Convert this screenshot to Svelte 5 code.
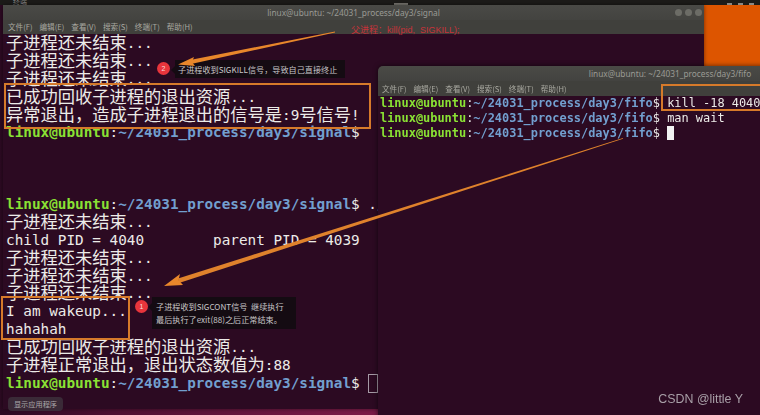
<script>
	const menu = ["文件(F)", "编辑(E)", "查看(V)", "搜索(S)", "终端(T)", "帮助(H)"];
	const signalPath = "~/24031_process/day3/signal";
	const fifoPath = "~/24031_process/day3/fifo";

	const signalLines = [
		{ text: "子进程还未结束..." },
		{ text: "子进程还未结束..." },
		{ text: "子进程还未结束..." },
		{ text: "已成功回收子进程的退出资源..." },
		{ text: "异常退出，造成子进程退出的信号是:9号信号!" },
		{ path: signalPath },
		{ text: "" },
		{ text: "" },
		{ text: "" },
		{ path: signalPath, cmd: " ./a.out" },
		{ text: "子进程还未结束..." },
		{ text: "child PID = 4040        parent PID = 4039" },
		{ text: "子进程还未结束..." },
		{ text: "子进程还未结束..." },
		{ text: "子进程还未结束..." },
		{ text: "I am wakeup..." },
		{ text: "hahahah" },
		{ text: "已成功回收子进程的退出资源..." },
		{ text: "子进程正常退出，退出状态数值为:88" },
		{ path: signalPath, cmd: " ", cursor: "hollow" },
	];

	const fifoLines = [
		{ path: fifoPath, cmd: " kill -18 4040" },
		{ path: fifoPath, cmd: " man wait" },
		{ path: fifoPath, cmd: " ", cursor: "solid" },
	];

	// terminal cells: wide chars take two columns, so they get their own font size
	function runs(text) {
		return text.split(/([^\x00-\x7f]+)/).filter(Boolean).map((t) => ({
			t,
			wide: t.charCodeAt(0) > 127,
		}));
	}
</script>

{#snippet lines(list)}
	{#each list as line}
		<div class="line">
			{#if line.path}
				<b class="user">linux@ubuntu</b>:<b class="path">{line.path}</b>${line.cmd ?? ""}{#if line.cursor}<i class={line.cursor}></i>{/if}
			{:else}
				{#each runs(line.text) as run}<span class:wide={run.wide}>{run.t}</span>{/each}
			{/if}
		</div>
	{/each}
{/snippet}

{#snippet menubar()}
	<div class="menu">
		{#each menu as item}
			<span>{item}</span>
		{/each}
	</div>
{/snippet}

<div class="desktop">
	<div class="soft">
		<div class="panel">
			<span>终端</span>
			<i class="clock"></i>
			<i class="tray"></i>
			<i class="tray"></i>
			<i class="tray"></i>
		</div>

		<section class="window back">
			<header class="title">
				<span>linux@ubuntu: {signalPath}</span>
				<div class="controls"><i></i><i></i><i></i></div>
			</header>
			{@render menubar()}
			<div class="term">{@render lines(signalLines)}</div>
		</section>

		<section class="window front">
			<header class="title">
				<span>linux@ubuntu: {fifoPath}</span>
			</header>
			{@render menubar()}
			<div class="term">{@render lines(fifoLines)}</div>
		</section>

		<button class="apps">显示应用程序</button>

		<div class="box box-exit"></div>
		<div class="box box-kill"></div>
		<div class="box box-wake"></div>

		<div class="parent-note">父进程：kill(pid,&nbsp; SIGKILL);</div>

		<div class="badge badge-two">2</div>
		<div class="tip tip-two">子进程收到SIGKILL信号，导致自己直接终止</div>

		<div class="badge badge-one">1</div>
		<div class="tip tip-one">
			子进程收到SIGCONT信号&nbsp; 继续执行<br />最后执行了exit(88)之后正常结束。
		</div>

		<svg class="arrows" viewBox="0 0 760 415" aria-hidden="true">
			<polygon points="335,31.5 190,60 191,64 335,32.5" fill="#e8872b" />
			<polygon points="178,64.5 194,57 192,62 195,66" fill="#e8872b" />
			<polygon points="623,138 178,278.500 179,283 623,138.800" fill="#df822c" />
			<polygon points="164,286 180,274 178.500,280 183,285" fill="#e8872b" />
		</svg>
	</div>

	<div class="mark">CSDN @little Y</div>
</div>

<style>
	:global(body) {
		margin: 0;
		background: #2c0a22;
	}

	.desktop {
		position: relative;
		width: 760px;
		height: 415px;
		overflow: hidden;
	}

	.soft {
		position: absolute;
		inset: 0;
		filter: blur(0.4px);
		background:
			linear-gradient(#dd5500, #dd5500) right top / 56px 66px no-repeat,
			linear-gradient(90deg, #2c0a22 0, #4f1032 15%, #7c1b48 48%);
	}

	.panel {
		height: 5px;
		overflow: hidden;
		background: #1c1b19;
		display: flex;
		align-items: flex-end;
		padding-left: 13px;
		font: 7px/8px "Noto Sans CJK SC", sans-serif;
		color: #888;
	}

	.panel .clock {
		width: 14px;
		height: 2px;
		margin-left: 367px;
		margin-right: auto;
		background: #77756f;
	}

	.panel .tray {
		width: 5px;
		height: 2px;
		margin-right: 6px;
		background: #8a8883;
	}

	.window {
		position: absolute;
		display: flex;
		flex-direction: column;
		overflow: hidden;
		background: #2c0a22;
	}

	.back {
		left: 3px;
		top: 5px;
		width: 701px;
		height: 404px;
		box-shadow: 0 0 4px rgba(0, 0, 0, 0.5);
	}

	.front {
		left: 378px;
		top: 66px;
		width: 584px;
		height: 360px;
		border-radius: 5px 0 0 0;
		box-shadow: 0 0 5px rgba(0, 0, 0, 0.6);
	}

	.title {
		position: relative;
		height: 15px;
		display: flex;
		align-items: center;
		justify-content: center;
		background: linear-gradient(#4a4a46, #434340);
		font: 8.3px "Noto Sans", sans-serif;
		color: #9a9a94;
	}

	.controls {
		position: absolute;
		right: 2px;
		top: 4px;
		display: flex;
		gap: 3px;
	}

	.controls i {
		width: 7px;
		height: 7px;
		border-radius: 50%;
		background: #6c6c66;
	}

	.menu {
		box-sizing: border-box;
		height: 14px;
		display: flex;
		gap: 7px;
		align-items: center;
		padding: 0 0 2px 5px;
		background: #40403c;
		font: 7.6px "Noto Sans CJK SC", sans-serif;
		color: #a8a8a0;
	}

	.front .menu {
		height: 15px;
		padding: 0 0 0 4px;
	}

	.term {
		flex: 1;
		padding: 1px 0 0 3px;
		font-family: "DejaVu Sans Mono", monospace;
		font-size: 14.34px;
		color: #ecebe8;
	}

	.line {
		height: 17.9px;
		line-height: 17.9px;
		white-space: pre;
	}

	.wide {
		font-family: "Noto Sans CJK SC", sans-serif;
		font-size: 17.26px;
		line-height: 0;
		vertical-align: -0.5px;
	}

	.user {
		color: #8ae234;
	}

	.path {
		color: #729fcf;
	}

	.hollow,
	.solid {
		display: inline-block;
		vertical-align: top;
	}

	.hollow {
		width: 8px;
		height: 17px;
		margin-top: -1px;
		border: 1px solid #a59aa5;
	}

	.front .term {
		padding: 0 0 0 2px;
		font-size: 11.93px;
	}

	.front .line {
		height: 15px;
		line-height: 15px;
	}

	.solid {
		width: 7px;
		height: 14px;
		background: #f2f2f2;
	}

	.apps {
		position: absolute;
		left: 8px;
		top: 397px;
		width: 55px;
		height: 14px;
		padding: 0;
		border: 0;
		border-radius: 4px;
		background: #3a2a37;
		font: 7.2px "Noto Sans CJK SC", sans-serif;
		color: #a9a5a8;
	}

	.box {
		position: absolute;
		box-sizing: border-box;
		border: 2px solid #d67a2a;
	}

	.box-exit {
		left: 4px;
		top: 83px;
		width: 367px;
		height: 46px;
	}

	.box-kill {
		left: 661px;
		top: 84px;
		width: 110px;
		height: 27px;
	}

	.box-wake {
		left: 1px;
		top: 296px;
		width: 129px;
		height: 44px;
	}

	.arrows {
		position: absolute;
		left: 0;
		top: 0;
		width: 760px;
		height: 415px;
	}

	.parent-note {
		position: absolute;
		left: 351px;
		top: 24px;
		font: 9px/12px "Liberation Sans", "Noto Sans CJK SC", sans-serif;
		color: #c8323a;
		white-space: nowrap;
	}

	.badge {
		position: absolute;
		width: 13px;
		height: 13px;
		border-radius: 50%;
		background: #e8353c;
		color: #f6dcdc;
		font: 7px/13px "Liberation Sans", sans-serif;
		text-align: center;
	}

	.badge-two {
		left: 157px;
		top: 62px;
	}

	.badge-one {
		left: 135px;
		top: 300px;
	}

	.tip {
		position: absolute;
		box-sizing: border-box;
		background: #140b12;
		color: #c9c6c8;
		font: 8.15px/13px "Noto Sans CJK SC", sans-serif;
		white-space: nowrap;
	}

	.tip::before {
		content: "";
		position: absolute;
		left: -4px;
		top: 6px;
		border: 4px solid transparent;
		border-left: 0;
		border-right-color: #140b12;
	}

	.tip-two {
		left: 175px;
		top: 60px;
		width: 170px;
		height: 18px;
		padding: 3px 0 0 3px;
	}

	.tip-one {
		left: 152px;
		top: 297px;
		width: 144px;
		height: 32px;
		padding: 3px 0 0 4px;
	}

	.mark {
		position: absolute;
		right: 17px;
		top: 391px;
		font: 12.4px/16px "Liberation Sans", sans-serif;
		color: #a89fa7;
	}
</style>
